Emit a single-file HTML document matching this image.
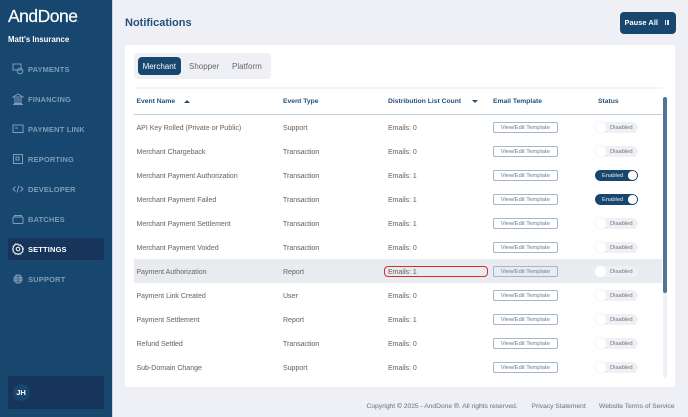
<!DOCTYPE html>
<html lang="en"><head><meta charset="utf-8"><title>Notifications</title>
<style>
*{box-sizing:border-box}
html,body{margin:0;padding:0}
body{width:688px;height:417px;overflow:hidden;background:#eff0f5;font-family:"Liberation Sans",sans-serif;position:relative}
.a{position:absolute;white-space:nowrap}
.side{left:0;top:0;width:112px;height:417px;background:#17466f}
.edge{left:112px;top:0;width:1px;height:417px;background:#c5d3e2}
.nav{left:28px;font-size:7.5px;font-weight:700;letter-spacing:.15px;color:#7f9cb8;line-height:10px;margin-top:1px}
.ic{left:12px;width:12px;height:12px;fill:none;stroke:#7f9cb8;stroke-width:1}
.c{font-size:7px;line-height:10px;color:#777272;margin-top:1.500px;-webkit-text-stroke:.1px #777272}
.f{font-size:6.7px;line-height:10px;color:#7b818c;-webkit-text-stroke:.1px #7b818c}
.h{font-size:6.75px;line-height:10px;font-weight:700;color:#24517b;top:96.5px}
.b{left:493px;width:64.5px;height:10.500px;border:1px solid #a3b6ca;border-radius:2px;background:#fff;font-size:5.8px;line-height:10px;text-align:center;color:#7c8a9b;-webkit-text-stroke:.06px #7c8a9b}
.t{left:595px;width:43px;height:10.500px;border-radius:6px;background:#eff0f5;font-size:5.8px;line-height:12.500px;color:#808080;padding-left:15px;-webkit-text-stroke:.06px #808080}
.t i{position:absolute;left:0;top:0;width:10.500px;height:10.500px;border-radius:50%;background:#fff;box-shadow:0 0 0 .5px #eceef3}
.t.on{background:#17466f;color:#e6ebf1;padding-left:6px;border:1px solid #17466f;line-height:10px;-webkit-text-stroke:0}
.t.on i{left:32px;top:0;width:8.500px;height:8.500px;box-shadow:none}
</style></head><body>
<div class="a side"></div><div class="a edge"></div>
<div class="a" style="left:8px;top:5px;font-size:17.5px;line-height:22px;color:#fff;letter-spacing:-.5px;-webkit-text-stroke:.2px #fff">AndDone<span style="font-size:3px">.</span></div>
<div class="a" style="left:8px;top:35px;font-size:7.8px;line-height:10px;font-weight:700;color:#fff">Matt's Insurance</div>

<svg class="a ic" style="top:63px" viewBox="0 0 12 12"><rect x="1" y="1" width="8" height="6"/><circle cx="8" cy="8" r="2.8"/></svg>
<div class="a nav" style="top:64px">PAYMENTS</div>
<svg class="a ic" style="top:93px" viewBox="0 0 12 12"><path d="M1 4 6 1l5 3zM2 10.500h8M1 11.500h10M3 5v5M5 5v5M7 5v5M9 5v5"/></svg>
<div class="a nav" style="top:94px">FINANCING</div>
<svg class="a ic" style="top:123px" viewBox="0 0 12 12"><rect x="1" y="2" width="10" height="7.500"/><path d="M3 5h3"/></svg>
<div class="a nav" style="top:124px">PAYMENT LINK</div>
<svg class="a ic" style="top:153px" viewBox="0 0 12 12"><rect x="1.500" y="1.500" width="9" height="9"/><path d="M4 4h3v3H4z"/></svg>
<div class="a nav" style="top:154px">REPORTING</div>
<svg class="a ic" style="top:183px" viewBox="0 0 12 12"><path d="M3.500 3.500 1 6l2.500 2.500M8.500 3.500 11 6 8.500 8.500M7 2.500 5 9.500"/></svg>
<div class="a nav" style="top:184px">DEVELOPER</div>
<svg class="a ic" style="top:213px" viewBox="0 0 12 12"><rect x="1" y="4" width="10" height="6.500" rx="1"/><path d="M2.500 4V2.500h7V4"/></svg>
<div class="a nav" style="top:214px">BATCHES</div>
<div class="a" style="left:8px;top:237.500px;width:96px;height:22px;background:#17345a;border-radius:1px"></div>
<svg class="a ic" style="top:243px;stroke:#fff" viewBox="0 0 12 12"><circle cx="6" cy="6" r="1.800"/><path d="M6 1l1 1.300 1.700-.3.600 1.600 1.600.6-.3 1.700L11.500 6l-.9 1.100.3 1.700-1.600.6-.6 1.600-1.700-.3L6 11.500l-1-.8-1.700.3-.6-1.600-1.600-.6.3-1.700L.5 6l.9-1.100-.3-1.700 1.600-.6.6-1.600 1.700.3z"/></svg>
<div class="a nav" style="top:244px;color:#fff">SETTINGS</div>
<svg class="a ic" style="top:273px;fill:#7f9cb8;stroke:#17466f;stroke-width:.6" viewBox="0 0 12 12"><circle cx="6" cy="6" r="5"/><path d="M1 6h10M6 1v10M2 3.500h8M2 8.500h8" fill="none"/></svg>
<div class="a nav" style="top:274px">SUPPORT</div>
<div class="a" style="left:8px;top:376px;width:96px;height:33px;background:#17345a;border-radius:1px"></div>
<div class="a" style="left:12.500px;top:384px;width:17px;height:17px;border-radius:50%;background:#17466f;color:#fff;font-size:7.500px;font-weight:700;line-height:17px;text-align:center">JH</div>

<div class="a" style="left:125px;top:15px;font-size:11px;line-height:17px;font-weight:700;color:#24517b">Notifications</div>
<div class="a" style="left:619.500px;top:11.500px;width:56px;height:22px;background:#17466f;border-radius:4px;color:#fff;font-size:7.500px;font-weight:700;line-height:21px;padding-left:5px">Pause All</div>
<div class="a" style="left:664.500px;top:20px;width:1.800px;height:4.500px;background:#dfe6ee"></div>
<div class="a" style="left:667.200px;top:20px;width:1.800px;height:4.500px;background:#dfe6ee"></div>

<div class="a" style="left:125px;top:45px;width:550px;height:342px;background:#fff;border-radius:3px"></div>
<div class="a" style="left:134px;top:53px;width:137px;height:26px;background:#eff0f5;border-radius:4px"></div>
<div class="a" style="left:138px;top:57px;width:42.500px;height:18px;background:#17466f;border-radius:4px;color:#fff;font-size:8px;line-height:19px;text-align:center">Merchant</div>
<div class="a" style="left:189px;top:62px;font-size:8px;line-height:10px;color:#666">Shopper</div>
<div class="a" style="left:232px;top:62px;font-size:8px;line-height:10px;color:#666">Platform</div>
<div class="a" style="left:134px;top:87px;width:528px;height:1.500px;background:#f3f4f7"></div>

<div class="a h" style="left:136.500px">Event Name</div>
<div class="a" style="left:184px;top:100px;border-left:3px solid transparent;border-right:3px solid transparent;border-bottom:3px solid #24517b"></div>
<div class="a h" style="left:283px">Event Type</div>
<div class="a h" style="left:388px">Distribution List Count</div>
<div class="a" style="left:471.500px;top:100px;border-left:3px solid transparent;border-right:3px solid transparent;border-top:3px solid #24517b"></div>
<div class="a h" style="left:493px">Email Template</div>
<div class="a h" style="left:598px">Status</div>
<div class="a" style="left:134px;top:114px;width:528px;height:1px;background:#bcd0e2"></div>

<div class="a" style="left:662.500px;top:97px;width:4px;height:281px;background:#eff0f5;border-radius:2px"></div>
<div class="a" style="left:662.500px;top:97px;width:4px;height:196px;background:#4f7597;border-radius:2px"></div>

<div class="a" style="left:134px;top:259px;width:528px;height:24px;background:#e8ebf0"></div>
<div class="a" style="left:384px;top:265.500px;width:104px;height:11.500px;border:1.500px solid #d32f2f;border-radius:4px"></div>

<div class="a c" style="left:136.500px;top:122px">API Key Rolled (Private or Public)</div><div class="a c" style="left:283px;top:122px">Support</div><div class="a c" style="left:388px;top:122px">Emails: 0</div><div class="a b" style="top:122px">View/Edit Template</div><div class="a t" style="top:122px"><i></i>Disabled</div>
<div class="a c" style="left:136.500px;top:146px">Merchant Chargeback</div><div class="a c" style="left:283px;top:146px">Transaction</div><div class="a c" style="left:388px;top:146px">Emails: 0</div><div class="a b" style="top:146px">View/Edit Template</div><div class="a t" style="top:146px"><i></i>Disabled</div>
<div class="a c" style="left:136.500px;top:170px">Merchant Payment Authorization</div><div class="a c" style="left:283px;top:170px">Transaction</div><div class="a c" style="left:388px;top:170px">Emails: 1</div><div class="a b" style="top:170px">View/Edit Template</div><div class="a t on" style="top:170px"><i></i>Enabled</div>
<div class="a c" style="left:136.500px;top:194px">Merchant Payment Failed</div><div class="a c" style="left:283px;top:194px">Transaction</div><div class="a c" style="left:388px;top:194px">Emails: 1</div><div class="a b" style="top:194px">View/Edit Template</div><div class="a t on" style="top:194px"><i></i>Enabled</div>
<div class="a c" style="left:136.500px;top:218px">Merchant Payment Settlement</div><div class="a c" style="left:283px;top:218px">Transaction</div><div class="a c" style="left:388px;top:218px">Emails: 1</div><div class="a b" style="top:218px">View/Edit Template</div><div class="a t" style="top:218px"><i></i>Disabled</div>
<div class="a c" style="left:136.500px;top:242px">Merchant Payment Voided</div><div class="a c" style="left:283px;top:242px">Transaction</div><div class="a c" style="left:388px;top:242px">Emails: 0</div><div class="a b" style="top:242px">View/Edit Template</div><div class="a t" style="top:242px"><i></i>Disabled</div>
<div class="a c" style="left:136.500px;top:266px">Payment Authorization</div><div class="a c" style="left:283px;top:266px">Report</div><div class="a c" style="left:388px;top:266px">Emails: 1</div><div class="a b" style="top:266px;background:#e8ebf0">View/Edit Template</div><div class="a t" style="top:266px"><i></i>Disabled</div>
<div class="a c" style="left:136.500px;top:290px">Payment Link Created</div><div class="a c" style="left:283px;top:290px">User</div><div class="a c" style="left:388px;top:290px">Emails: 0</div><div class="a b" style="top:290px">View/Edit Template</div><div class="a t" style="top:290px"><i></i>Disabled</div>
<div class="a c" style="left:136.500px;top:314px">Payment Settlement</div><div class="a c" style="left:283px;top:314px">Report</div><div class="a c" style="left:388px;top:314px">Emails: 1</div><div class="a b" style="top:314px">View/Edit Template</div><div class="a t" style="top:314px"><i></i>Disabled</div>
<div class="a c" style="left:136.500px;top:338px">Refund Settled</div><div class="a c" style="left:283px;top:338px">Transaction</div><div class="a c" style="left:388px;top:338px">Emails: 0</div><div class="a b" style="top:338px">View/Edit Template</div><div class="a t" style="top:338px"><i></i>Disabled</div>
<div class="a c" style="left:136.500px;top:362px">Sub-Domain Change</div><div class="a c" style="left:283px;top:362px">Support</div><div class="a c" style="left:388px;top:362px">Emails: 0</div><div class="a b" style="top:362px">View/Edit Template</div><div class="a t" style="top:362px"><i></i>Disabled</div>

<div class="a f" style="left:366.500px;top:401.500px">Copyright © 2025 - AndDone ®. All rights reserved.</div>
<div class="a f" style="left:531.500px;top:401.500px">Privacy Statement</div>
<div class="a f" style="left:599px;top:401.500px">Website Terms of Service</div>
</body></html>
